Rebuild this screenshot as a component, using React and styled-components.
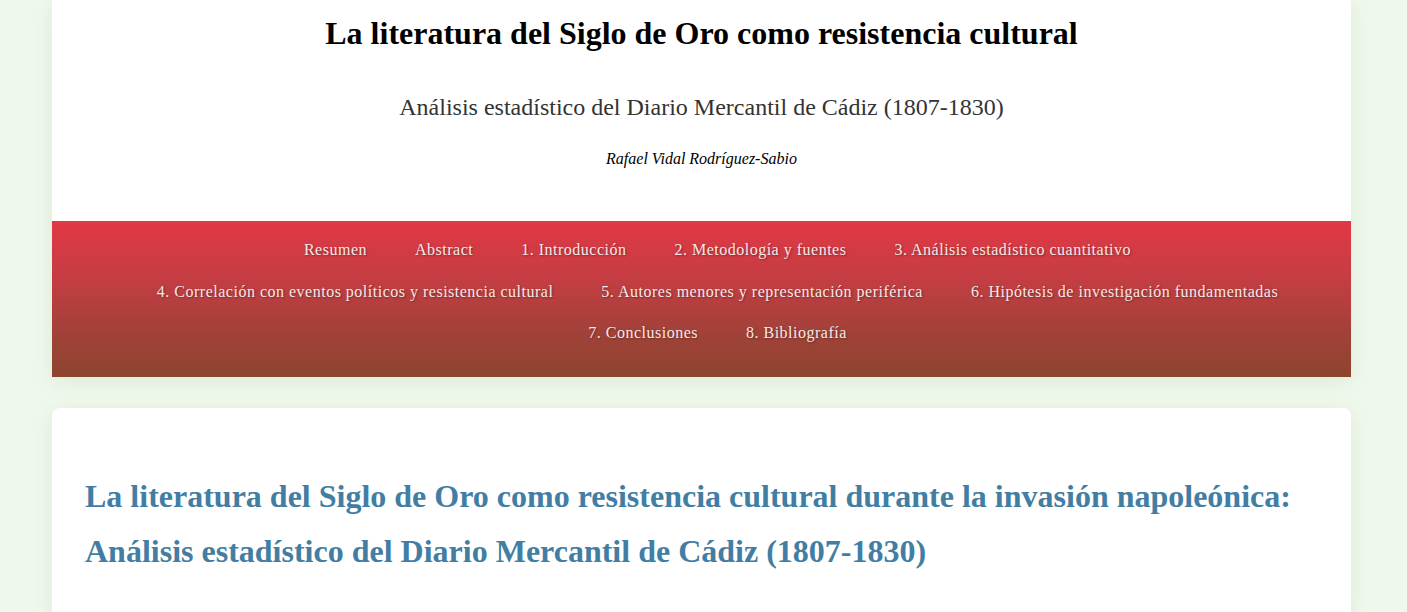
import styled, { createGlobalStyle } from 'styled-components';

const GlobalStyle = createGlobalStyle`
  body {
    margin: 0;
    background: #eff8ec;
    font-family: "Liberation Serif", "Times New Roman", serif;
  }
`;

const Page = styled.div`
  width: 1299px;
  margin: 0 56px 0 52px;
  padding-bottom: 40px;
`;

const Header = styled.header`
  background: #fff;
  box-shadow: 0 4px 20px rgba(90, 140, 80, 0.12);
  text-align: center;
  padding-top: 14px;

  h1 {
    margin: 0;
    font-size: 32px;
    line-height: 38px;
    font-weight: bold;
    color: #000;
  }
  h2 {
    margin: 40px 0 0;
    font-size: 24px;
    line-height: 30px;
    font-weight: normal;
    color: #333;
  }
  p {
    margin: 25px 0 0;
    padding-bottom: 50px;
    font-size: 16px;
    line-height: 24px;
    font-style: italic;
    color: #000;
  }
`;

const Nav = styled.nav`
  background: linear-gradient(to bottom, #e13845 0%, #c63d43 35%, #a3413a 70%, #8c452d 100%);
  padding: 8px 20px 23px 52px;
  display: flex;
  flex-wrap: wrap;
  justify-content: center;
`;

const NavLink = styled.a`
  color: #f6e8e6;
  font-size: 16px;
  line-height: 41.5px;
  letter-spacing: 0.5px;
  text-decoration: none;
  text-shadow: 1px 1px 2px rgba(0, 0, 0, 0.35);
  margin: 0 24px;
  cursor: pointer;
`;

const Card = styled.section`
  background: #fff;
  border-radius: 8px;
  margin-top: 31px;
  padding: 61px 33px 40px;
  box-shadow: 0 4px 20px rgba(90, 140, 80, 0.12);

  h1 {
    margin: 0;
    font-size: 32px;
    line-height: 55px;
    font-weight: bold;
    color: #427ea3;
  }
`;

const links = [
  'Resumen',
  'Abstract',
  '1. Introducción',
  '2. Metodología y fuentes',
  '3. Análisis estadístico cuantitativo',
  '4. Correlación con eventos políticos y resistencia cultural',
  '5. Autores menores y representación periférica',
  '6. Hipótesis de investigación fundamentadas',
  '7. Conclusiones',
  '8. Bibliografía',
];

export default function App() {
  return (
    <Page>
      <GlobalStyle />
      <Header>
        <h1>La literatura del Siglo de Oro como resistencia cultural</h1>
        <h2>Análisis estadístico del Diario Mercantil de Cádiz (1807-1830)</h2>
        <p>Rafael Vidal Rodríguez-Sabio</p>
        <Nav>
          {links.map(l => (
            <NavLink key={l}>{l}</NavLink>
          ))}
        </Nav>
      </Header>
      <Card>
        <h1>
          La literatura del Siglo de Oro como resistencia cultural durante la invasión napoleónica:
          Análisis estadístico del Diario Mercantil de Cádiz (1807-1830)
        </h1>
      </Card>
    </Page>
  );
}
